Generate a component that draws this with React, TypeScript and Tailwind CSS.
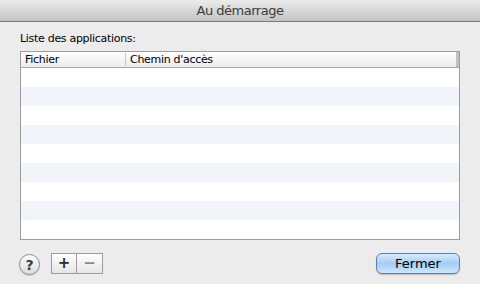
// startup items dialog ("Au démarrage")
import React from "react";

const ROWS = 9

function HelpButton() {
  return (
    <button className="flex items-center justify-center w-[21px] h-[21px] rounded-full border border-[#8c8c8c] bg-gradient-to-b from-white to-[#dcdcdc] shadow-[0_1px_1px_rgba(0,0,0,0.15)] text-[14px] font-bold leading-none text-[#3a3a3a]">
      ?
    </button>
  )
}

function AddRemove() {
  return (
    <div className="flex h-[21px] border border-[#9c9c9c] bg-gradient-to-b from-white to-[#e6e6e6]">
      <button className="w-[25px] flex items-center justify-center border-r border-[#9c9c9c] text-[15px] font-bold leading-none text-[#2a2a2a]">+</button>
      <button className="w-[25px] flex items-center justify-center text-[15px] font-bold leading-none text-[#8a8a8a]">−</button>
    </div>
  )
}

export default function App() {
  return (
    <div className="w-[480px] h-[284px] bg-[#ececec] flex flex-col font-['DejaVu_Sans',sans-serif] text-black">
      {/* title bar */}
      <div className="h-[22px] shrink-0 flex items-center justify-center border-b border-[#7a7a7a] bg-gradient-to-b from-[#ececec] to-[#c3c3c3] text-[13px] tracking-[-0.5px] text-[#3c3c3c]">
        Au démarrage
      </div>

      <div className="flex flex-col px-[20px] pt-[10px]">
        <div className="text-[11px] leading-[14px] h-[18px] tracking-[-0.3px]">Liste des applications:</div>

        {/* list */}
        <div className="w-[440px] mt-[1px] border border-[#9d9d9d] bg-white flex flex-col">
          <div className="h-[16px] flex items-stretch border-b border-[#a8a8a8] bg-gradient-to-b from-white to-[#ececec] text-[11px] tracking-[-0.3px]">
            <div className="w-[105px] pl-[4px] border-r border-[#c6c6c6] my-[1px] leading-[13px]">Fichier</div>
            <div className="flex-1 pl-[4px] my-[1px] leading-[13px]">Chemin d'accès</div>
            <div className="w-[3px] bg-[#c0c0c0]"></div>
          </div>
          {Array.from({ length: ROWS }).map((_, i) => (
            <div key={i} className={`h-[19px] ${i % 2 === 1 ? 'bg-[#f1f5fa]' : 'bg-white'}`}></div>
          ))}
        </div>

        {/* bottom buttons */}
        <div className="flex items-center mt-[12px]">
          <div className="-ml-[1px] mt-[2px]"><HelpButton /></div>
          <div className="ml-[11px]"><AddRemove /></div>
          <button className="ml-auto w-[84px] h-[21px] rounded-[6px] border border-[#5e7fa8] bg-gradient-to-b from-[#dbeafb] via-[#a4ccf4] to-[#cde7ff] shadow-[0_1px_1px_rgba(0,0,0,0.2)] text-[13px] leading-none text-black">
            Fermer
          </button>
        </div>
      </div>
    </div>
  );
}
